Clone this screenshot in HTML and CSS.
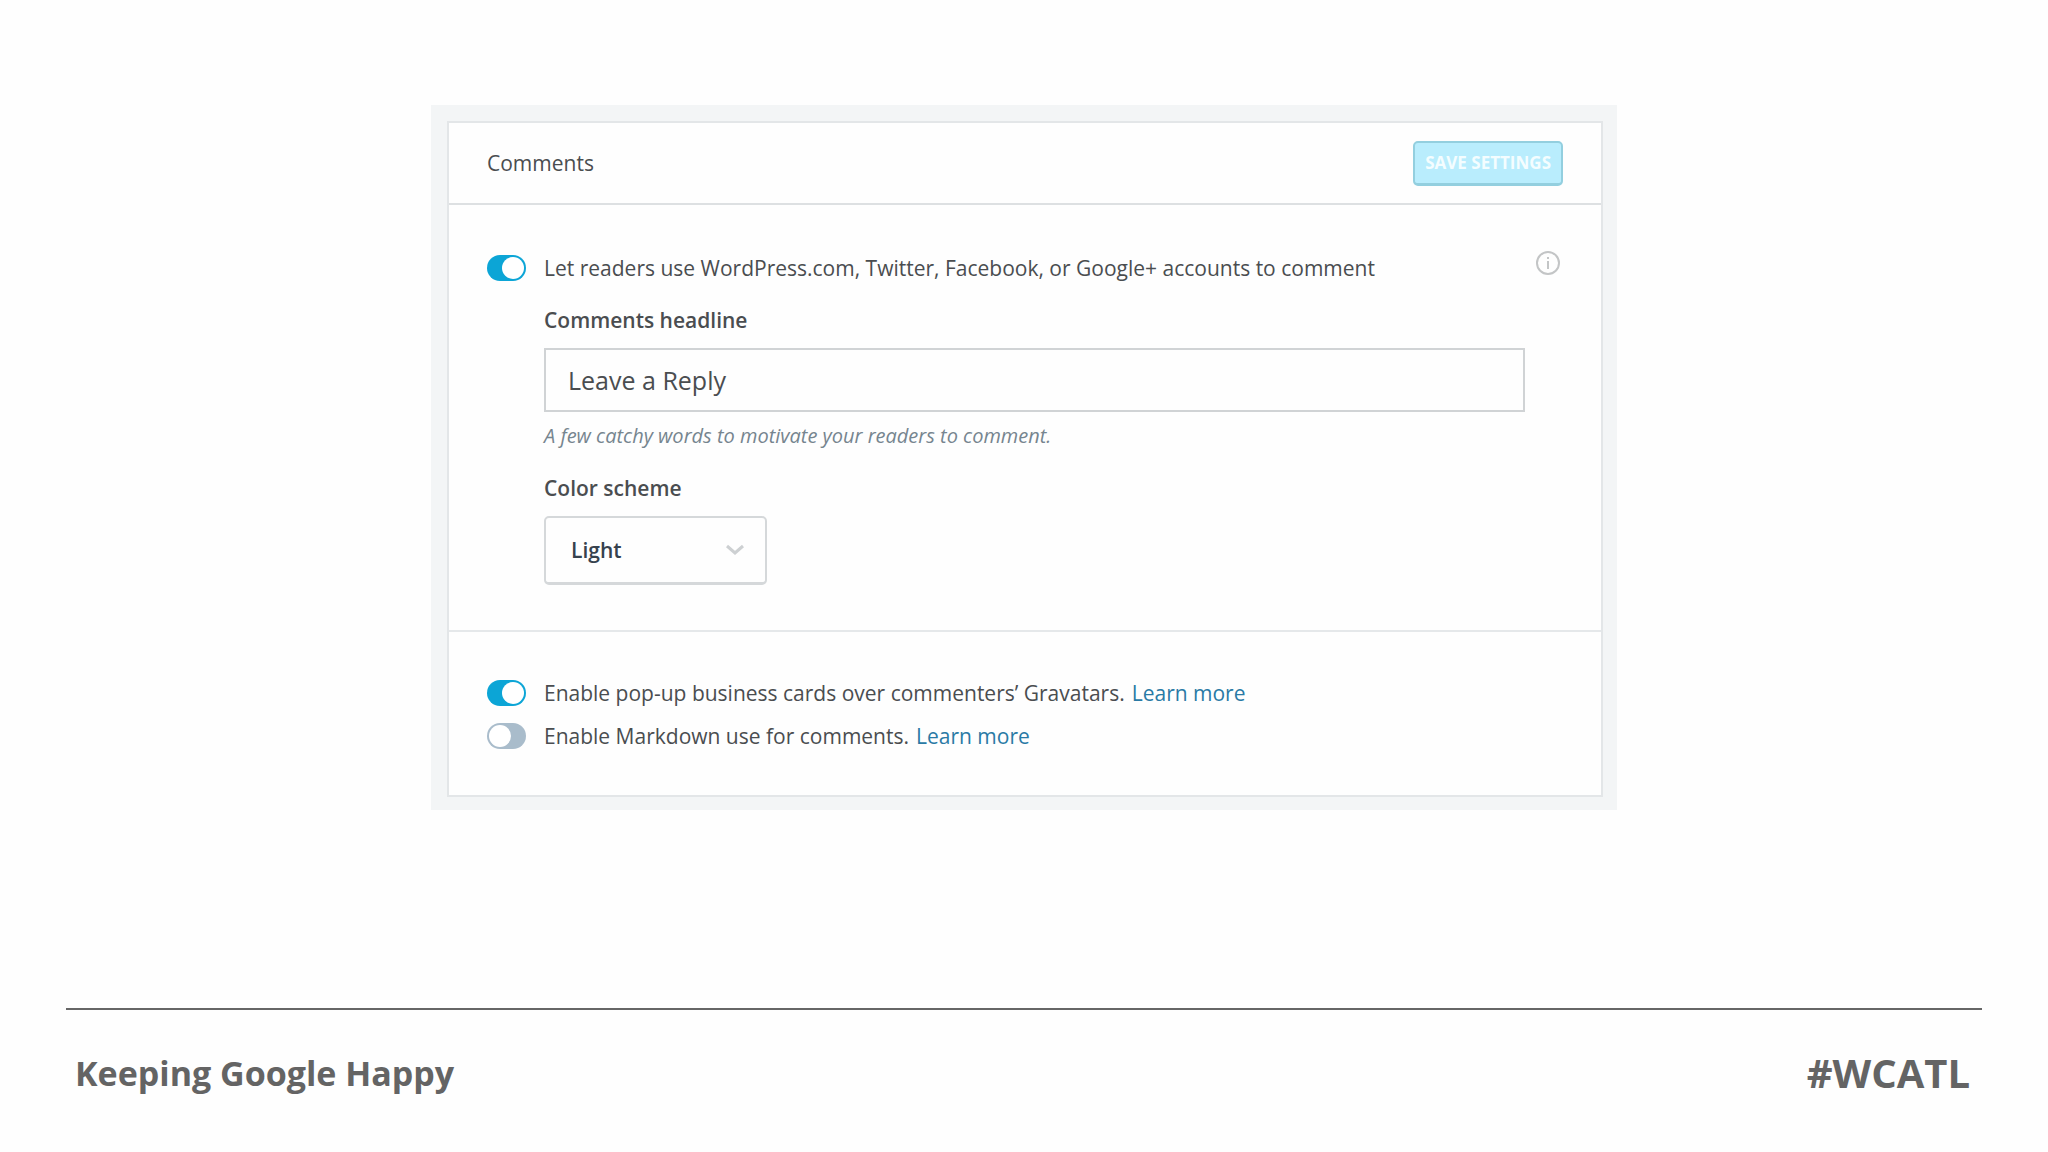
FILE: index.html
```html
<!DOCTYPE html>
<html lang="en">

<head>
    <meta charset="UTF-8">
    <meta name="viewport" content="width=device-width, initial-scale=1.0">
    <title>Keeping Google Happy</title>
    <link rel="stylesheet" href="styles.css">
</head>

<body>
    <main class="slide">
        <div class="panel">
            <form class="card">
                <header class="card-header">
                    <h1>Comments</h1>
                    <button type="submit" class="save" disabled>SAVE SETTINGS</button>
                </header>

                <section class="group accounts">
                    <div class="row">
                        <input type="checkbox" class="toggle" id="accounts" checked>
                        <label for="accounts">Let readers use WordPress.com, Twitter, Facebook, or Google+ accounts to comment</label>
                        <button type="button" class="info" aria-label="More information">
                            <svg viewBox="0 0 26 26" width="26" height="26">
                                <circle cx="13" cy="13" r="11" fill="none" stroke="#c3c5c6" stroke-width="2" />
                                <path d="M13 11v8M13 7v2" stroke="#c3c5c6" stroke-width="2" />
                            </svg>
                        </button>
                    </div>

                    <div class="fields">
                        <label class="field-label" for="headline">Comments headline</label>
                        <input type="text" class="headline" id="headline" value="Leave a Reply">
                        <p class="hint">A few catchy words to motivate your readers to comment.</p>

                        <label class="field-label" for="scheme">Color scheme</label>
                        <div class="select-box">
                            <select id="scheme">
                                <option>Light</option>
                                <option>Dark</option>
                                <option>Transparent</option>
                            </select>
                            <svg class="chevron" viewBox="0 0 20 14" width="20" height="14">
                                <path d="M2 3l8 7 8-7" fill="none" stroke="#cdd0d2" stroke-width="3" />
                            </svg>
                        </div>
                    </div>
                </section>

                <section class="group extras">
                    <div class="row">
                        <input type="checkbox" class="toggle" id="cards" checked>
                        <label for="cards">Enable pop-up business cards over commenters’ Gravatars.</label>
                        <a href="#">Learn more</a>
                    </div>
                    <div class="row">
                        <input type="checkbox" class="toggle" id="markdown">
                        <label for="markdown">Enable Markdown use for comments.</label>
                        <a href="#">Learn more</a>
                    </div>
                </section>
            </form>
        </div>

        <footer class="slide-footer">
            <span class="talk">Keeping Google Happy</span>
            <span class="hashtag">#WCATL</span>
        </footer>
    </main>
</body>

</html>
```

FILE: styles.css
```css
* {
    box-sizing: border-box;
}

body {
    margin: 0;
    background: #fefefe;
    color: #4a4d50;
    font-family: "Open Sans", "Noto Sans", sans-serif;
    font-size: 21px;
    line-height: 28px;
}

h1,
p {
    margin: 0;
}

button,
input,
select {
    margin: 0;
    font-family: inherit;
}

a {
    color: #2a7aa5;
    text-decoration: none;
}

.slide {
    display: flex;
    flex-direction: column;
    justify-content: space-between;
    min-height: 100vh;
    padding: 105px 66px 0;
}

/* settings panel */
.panel {
    width: 100%;
    max-width: 1186px;
    margin: 0 auto;
    padding: 16px 14px 13px 16px;
    background: #f3f5f6;
}

.card {
    background: #fefefe;
    border: 2px solid #e3e6e8;
}

.card-header {
    display: flex;
    align-items: center;
    justify-content: space-between;
    height: 82px;
    padding: 0 38px;
    border-bottom: 2px solid #dde0e2;
}

.card-header h1 {
    font-size: 21px;
    font-weight: 400;
}

.save {
    height: 45px;
    padding: 0 10px;
    background: #b9edfd;
    border: 2px solid #93cfdf;
    border-bottom-width: 3px;
    border-radius: 5px;
    color: #f4fdff;
    font-size: 17px;
    font-weight: 700;
}

.group {
    padding: 0 38px;
}

.accounts {
    padding-top: 49px;
    padding-bottom: 45px;
    border-bottom: 2px solid #e5e8ea;
}

.extras {
    display: flex;
    flex-direction: column;
    gap: 15px;
    padding-top: 47px;
    padding-bottom: 45px;
}

.row {
    display: flex;
    align-items: center;
    height: 28px;
}

.row a {
    margin-left: 7px;
}

.toggle {
    display: flex;
    align-items: center;
    flex: none;
    width: 39px;
    height: 26px;
    margin-right: 18px;
    padding: 2px;
    appearance: none;
    background: #a9bccb;
    border-radius: 13px;
}

.toggle::before {
    content: "";
    width: 22px;
    height: 22px;
    background: #fff;
    border-radius: 50%;
}

.toggle:checked {
    justify-content: flex-end;
    background: #0ca5d6;
}

.info {
    margin: 0 2px 10px auto;
    padding: 0;
    background: none;
    border: 0;
}

.info svg {
    display: block;
}

.fields {
    padding: 24px 38px 0 57px;
}

.field-label {
    display: block;
    font-weight: 600;
}

.headline {
    display: block;
    width: 100%;
    height: 64px;
    margin-top: 14px;
    padding: 0 22px;
    background: #fefefe;
    border: 2px solid #d0d3d5;
    color: #4a4d50;
    font-size: 25px;
}

.hint {
    margin: 10px 0 24px;
    color: #76858f;
    font-size: 20px;
    font-style: italic;
}

.select-box {
    position: relative;
    width: 223px;
    margin-top: 14px;
}

.select-box select {
    display: block;
    width: 100%;
    height: 69px;
    padding: 0 25px;
    appearance: none;
    background: #fefefe;
    border: 2px solid #d5d8da;
    border-bottom-width: 3px;
    border-radius: 5px;
    color: #36424e;
    font-size: 21px;
    font-weight: 600;
}

/* arrow lies over the drop-down */
.chevron {
    position: absolute;
    top: 27px;
    right: 22px;
    pointer-events: none;
}

/* footer of the slide */
.slide-footer {
    display: flex;
    align-items: center;
    justify-content: space-between;
    height: 144px;
    padding: 0 12px 16px 9px;
    border-top: 2px solid #666;
    color: #646464;
    font-weight: 700;
}

.talk {
    font-size: 34px;
}

.hashtag {
    font-size: 40px;
}
```
